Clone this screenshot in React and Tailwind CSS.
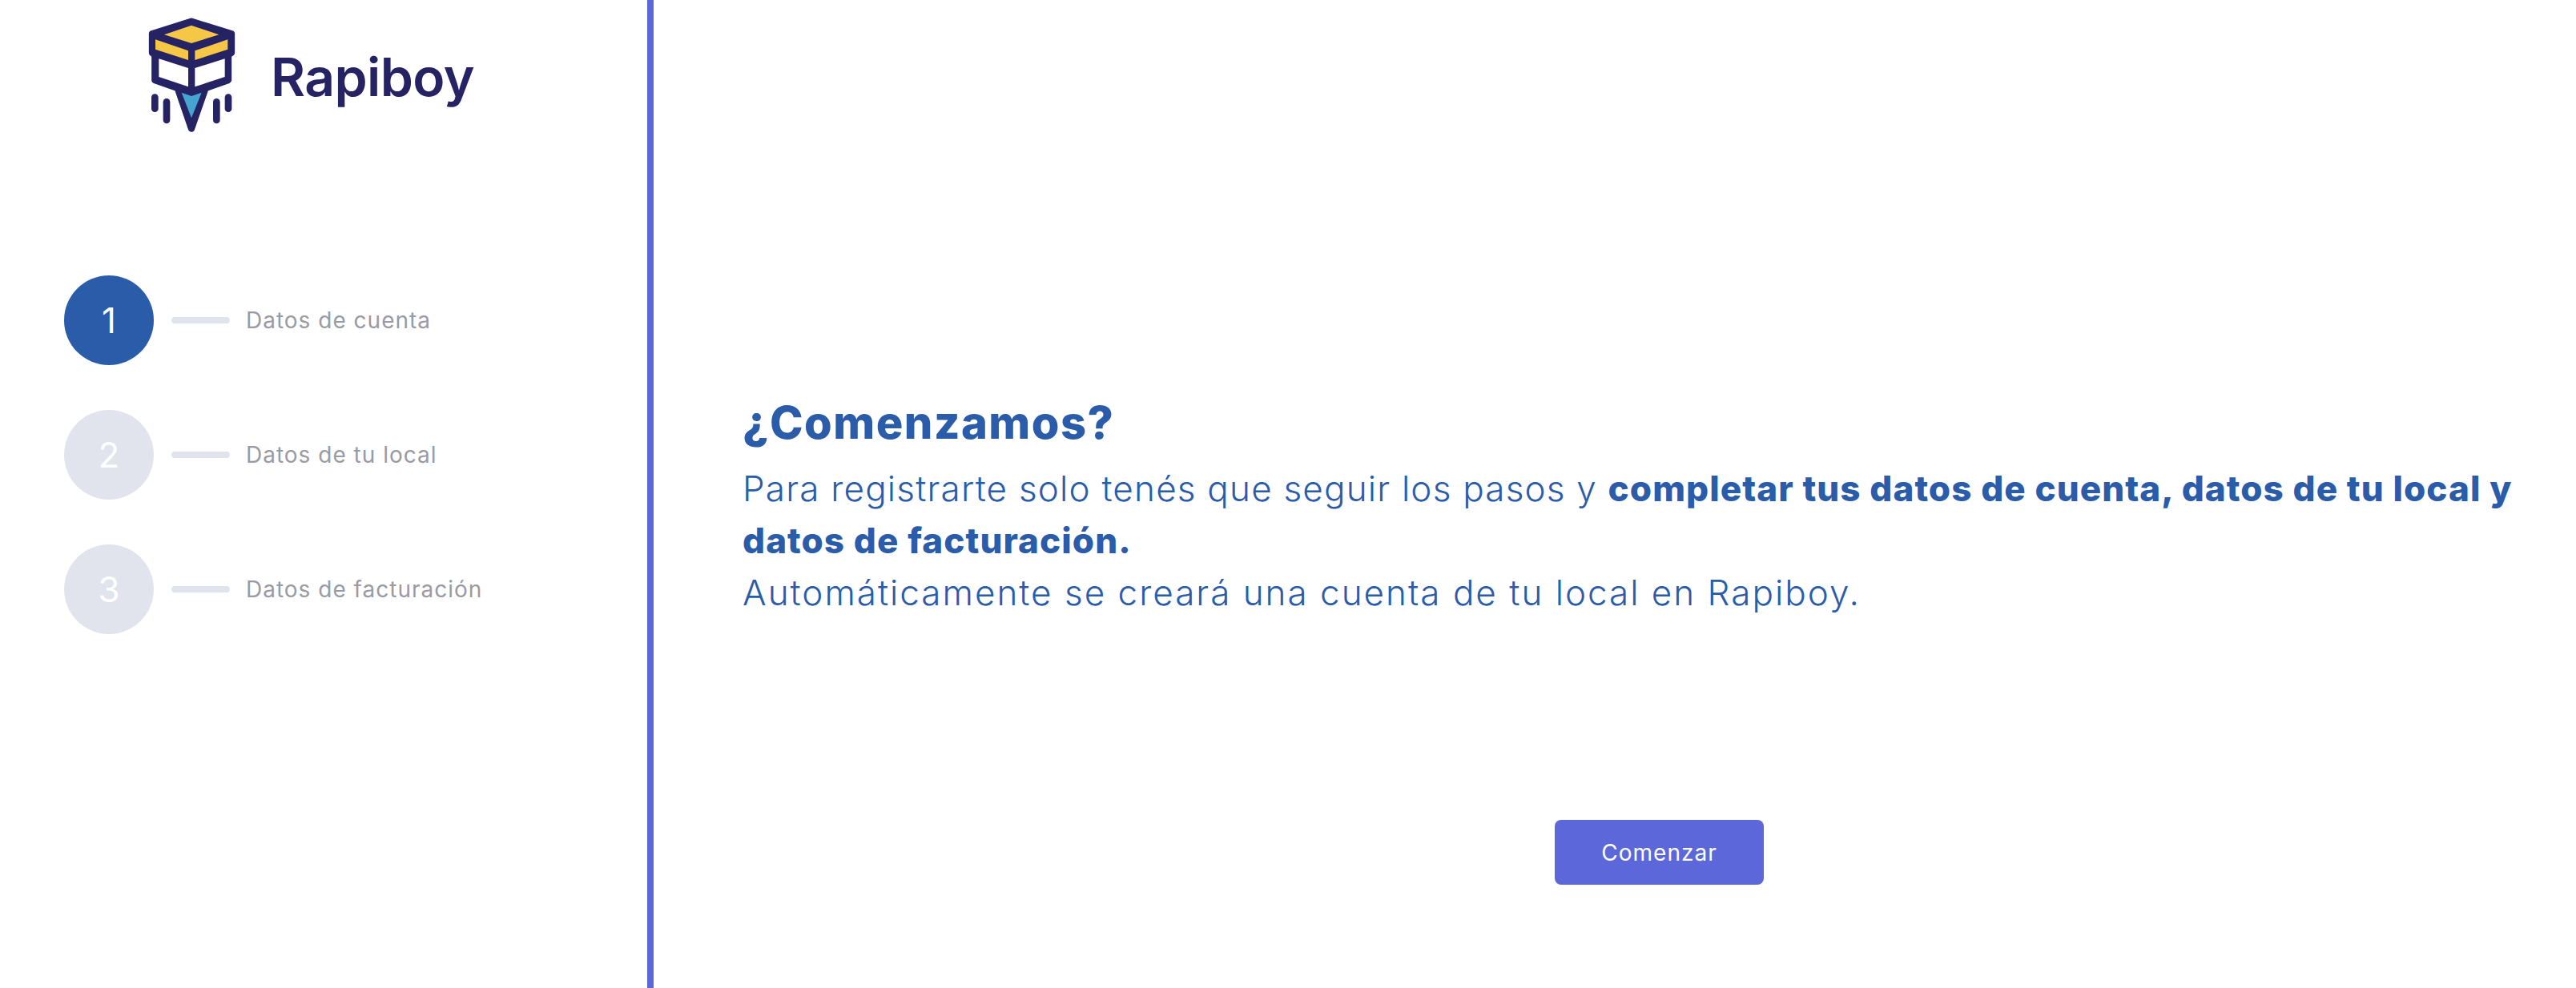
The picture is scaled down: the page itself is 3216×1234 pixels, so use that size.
const font = { fontFamily: 'Inter, "Noto Sans", sans-serif' };

const Logo = () => (
  <svg width="140" height="170" viewBox="0 0 420 510" fill="none">
    <path
      d="M60 97 L207 50 L357 97 L357 168 L345 175 L345 270 L260 300 L207 452 L155 300 L70 270 L70 175 L60 168 Z"
      fill="#252364"
      stroke="#252364"
      strokeWidth="25"
      strokeLinejoin="round"
    />
    <path d="M105 100 L207 65 L310 100 L207 132 Z" fill="#f6c747" />
    <path d="M72 118 L195 160 L195 195 L72 155 Z" fill="#f6c747" />
    <path d="M220 160 L343 118 L343 155 L220 195 Z" fill="#f6c747" />
    <path d="M85 190 L195 225 L195 295 L85 258 Z" fill="#fff" />
    <path d="M220 225 L332 190 L332 258 L220 295 Z" fill="#fff" />
    <path d="M170 317 L207 330 L245 317 L207 412 Z" fill="#45a4d0" />
    <g stroke="#252364" strokeWidth="26" strokeLinecap="round">
      <path d="M70 335 L70 377" />
      <path d="M114 352 L114 420" />
      <path d="M301 352 L301 420" />
      <path d="M345 335 L345 377" />
    </g>
  </svg>
);

const steps = [
  { n: 1, label: 'Datos de cuenta', active: true },
  { n: 2, label: 'Datos de tu local' },
  { n: 3, label: 'Datos de facturación' },
];

const Step = ({ step }) => (
  <div className="flex items-center">
    <div
      className={`flex h-[112px] w-[112px] items-center justify-center rounded-full text-[44px] font-normal text-white ${
        step.active ? 'bg-[#2a5caa]' : 'bg-[#e1e4ec]'
      }`}>
      {step.n}
    </div>
    <div className="ml-[22px] h-[8px] w-[73px] rounded-full bg-[#e1e4ec]" />
    <span className="ml-[20px] text-[28px] tracking-[1px] text-[#9a9aa4]">
      {step.label}
    </span>
  </div>
);

export default function App() {
  return (
    <div className="flex h-[1234px] w-[3216px] bg-white" style={font}>
      <aside className="w-[816px] shrink-0 border-r-[8px] border-[#5c68d9]">
        <div className="ml-[170px] mt-[10px] flex items-start">
          <Logo />
          <span className="ml-[28px] mt-[46px] text-[66px] font-semibold leading-[80px] tracking-[-0.6px] text-[#252364]">
            Rapiboy
          </span>
        </div>
        <div className="ml-[80px] mt-[164px] flex flex-col gap-[56px]">
          {steps.map((step) => (
            <Step key={step.n} step={step} />
          ))}
        </div>
      </aside>
      <main className="flex flex-1 flex-col pl-[111px] pr-[60px] pt-[484px] text-[#2a5caa]">
        <h1 className="mb-[6px] text-[56px] font-extrabold leading-[88px] tracking-[1.5px]">
          ¿Comenzamos?
        </h1>
        <p className="text-[44px] font-light leading-[65px]">
          <span className="tracking-[1.2px]">
            Para registrarte solo tenés que seguir los pasos y{' '}
          </span>
          <strong className="font-extrabold tracking-[1.07px]">
            completar tus datos de cuenta, datos de tu local y
          </strong>
          <br />
          <strong className="font-extrabold tracking-[1.07px]">
            datos de facturación.
          </strong>
          <br />
          <span className="tracking-[2px]">
            Automáticamente se creará una cuenta de tu local en Rapiboy.
          </span>
        </p>
        <button className="ml-[1014px] mt-[251px] h-[81px] w-[261px] rounded-[8px] bg-[#5c68d9] text-[28px] tracking-[1px] text-white">
          Comenzar
        </button>
      </main>
    </div>
  );
}
